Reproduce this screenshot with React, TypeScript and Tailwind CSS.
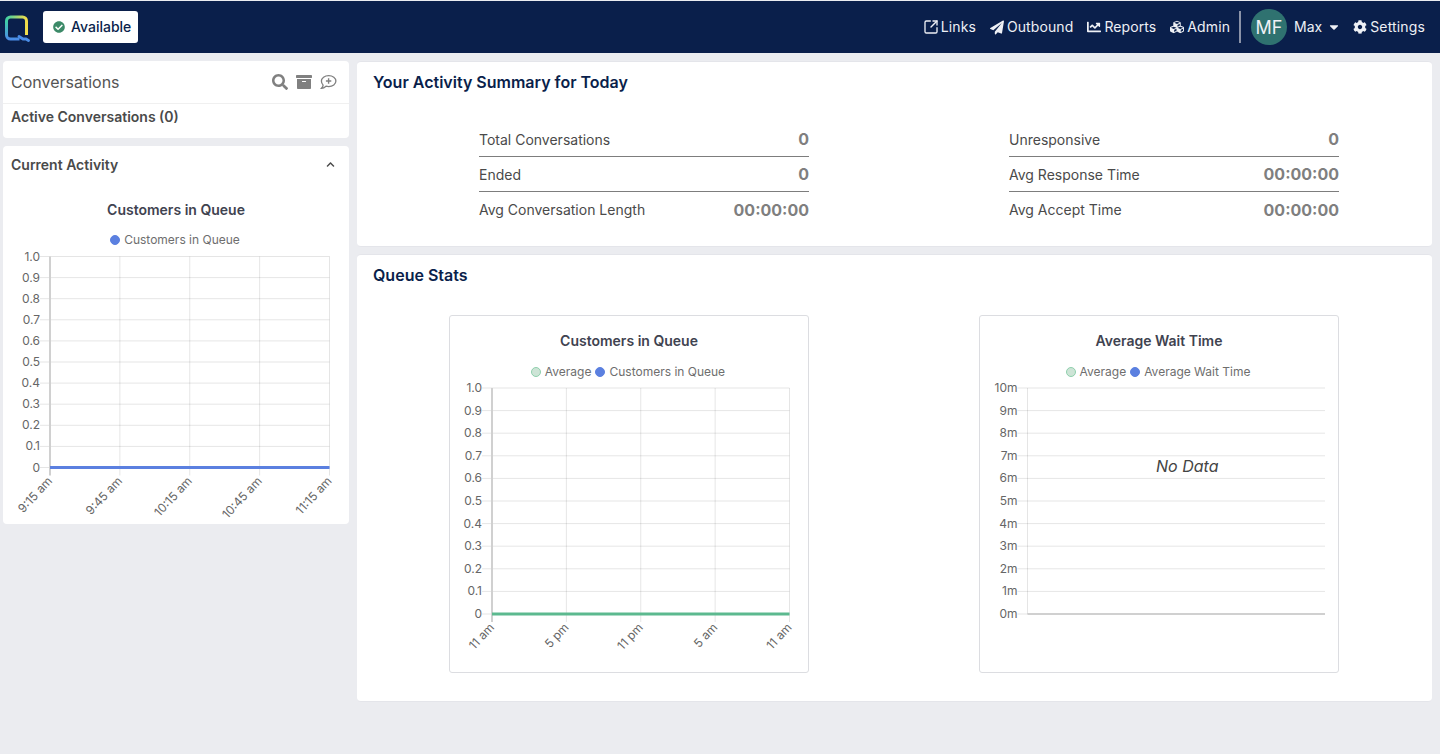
import React from "react";
import {
  FaArchive,
  FaCaretDown,
  FaChartLine,
  FaCheckCircle,
  FaChevronUp,
  FaCog,
  FaCubes,
  FaPaperPlane,
  FaSearch,
} from "react-icons/fa";
import { SquareArrowOutUpRight } from "lucide-react";

const FONT = "font-['Inter','Liberation_Sans',sans-serif]";

const Logo = () => (
  <svg width="30" height="28" viewBox="0 0 30 28" className="block">
    <defs>
      <linearGradient id="logoTop" x1="0" y1="0" x2="1" y2="0">
        <stop offset="0" stopColor="#3fcfa5" />
        <stop offset="1" stopColor="#f2dc4a" />
      </linearGradient>
      <linearGradient id="logoLeft" x1="0" y1="0" x2="0" y2="1">
        <stop offset="0" stopColor="#3fcfa5" />
        <stop offset="1" stopColor="#4a8de8" />
      </linearGradient>
    </defs>
    <path d="M5.500 21V7a4 4 0 0 1 4-4h12a4 4 0 0 1 4 4v14" fill="none" stroke="url(#logoTop)" strokeWidth="3" />
    <path d="M5.500 7v14a4 4 0 0 0 4 4h9" fill="none" stroke="url(#logoLeft)" strokeWidth="3" />
    <path d="M18 22.500l4 2.500h3l2.500 1.500" fill="none" stroke="#4a8de8" strokeWidth="2.800" strokeLinecap="round" />
  </svg>
);

// chat bubble with a plus, no matching icon in the packs
const NewChatIcon = () => (
  <svg width="17" height="16" viewBox="0 0 17 16" fill="none" stroke="#808080" strokeWidth="1.300">
    <path d="M8.700 1.600c4 0 7.200 2.400 7.200 5.500s-3.200 5.500-7.200 5.500c-1 0-1.900-.15-2.700-.4C5 13.100 3.600 14.200 1.500 14.300c.9-.9 1.500-2 1.600-3.200C2 10 1.400 8.600 1.400 7.100c0-3.100 3.300-5.500 7.300-5.500z" />
    <path d="M8.600 4.300v5.400M5.900 7h5.400" strokeWidth="1.400" />
  </svg>
);

const NavItem: React.FC<{ icon: React.ReactNode; label: string; wide?: boolean }> = ({ icon, label, wide }) => (
  <div className={`flex items-center gap-[3px] text-[14px] text-[#eef0f5] ${wide ? "tracking-[0.15px]" : "tracking-[0.1px]"}`}>
    <span className="flex w-[14px] justify-center">{icon}</span>
    <span className="pb-[2px]">{label}</span>
  </div>
);

const StatRow: React.FC<{ label: string; value: string; last?: boolean }> = ({ label, value, last }) => (
  <div className={`flex h-[35px] items-center justify-between ${last ? "" : "border-b border-[#7d7d7d]"}`}>
    <span className="text-[14px] text-[#4a4a4a]">{label}</span>
    <span className="text-[16px] font-bold text-[#7f7f7f]">{value}</span>
  </div>
);

const LegendDot: React.FC<{ color: string; border: string; label: string }> = ({ color, border, label }) => (
  <span className="flex items-center gap-[4px]">
    <span className="h-[10px] w-[10px] rounded-full border" style={{ backgroundColor: color, borderColor: border }} />
    <span>{label}</span>
  </span>
);

type ChartProps = {
  width: number;
  height: number;
  x0: number;
  x1: number;
  y0: number;
  y1: number;
  yLabels: string[];
  xLabels?: string[];
  lineColor?: string;
  noData?: boolean;
};

const Chart: React.FC<ChartProps> = ({ width, height, x0, x1, y0, y1, yLabels, xLabels, lineColor, noData }) => {
  const stepY = (y1 - y0) / (yLabels.length - 1);
  const stepX = xLabels ? (x1 - x0) / (xLabels.length - 1) : 0;
  return (
    <svg width={width} height={height} className="block">
      {yLabels.map((label, i) => {
        const y = y0 + stepY * i;
        return (
          <g key={label}>
            <line x1={x0 - 10} x2={x1} y1={y} y2={y} stroke="#000" strokeOpacity="0.1" />
            <text x={x0 - 10} y={y + 4} textAnchor="end" fontSize="12" fill="#666">
              {label}
            </text>
          </g>
        );
      })}
      {xLabels?.map((label, i) => {
        const x = x0 + stepX * i;
        return (
          <g key={label + i}>
            {i > 0 && <line x1={x} x2={x} y1={y0} y2={y1 + 8} stroke="#000" strokeOpacity="0.1" />}
            <text
              x={x + 3}
              y={y1 + 14}
              textAnchor="end"
              fontSize="12"
              fill="#666"
              transform={`rotate(-47 ${x + 3} ${y1 + 14})`}
            >
              {label}
            </text>
          </g>
        );
      })}
      {xLabels ? (
        <line x1={x0} x2={x0} y1={y0} y2={y1 + 8} stroke="#d0d0d0" strokeWidth="2" />
      ) : (
        <>
          <line x1={x0} x2={x0} y1={y0} y2={y1} stroke="#000" strokeOpacity="0.1" />
          <line x1={x0} x2={x1} y1={y1} y2={y1} stroke="#d0d0d0" strokeWidth="2" />
        </>
      )}
      {lineColor && <line x1={x0} x2={x1} y1={y1} y2={y1} stroke={lineColor} strokeWidth="3" />}
      {noData && (
        <text x={(x0 + x1) / 2 + 11} y={y0 + 84} textAnchor="middle" fontSize="16" fontStyle="italic" fill="#444">
          No Data
        </text>
      )}
    </svg>
  );
};

const decimals = ["1.0", "0.9", "0.8", "0.7", "0.6", "0.5", "0.4", "0.3", "0.2", "0.1", "0"];
const minutes = ["10m", "9m", "8m", "7m", "6m", "5m", "4m", "3m", "2m", "1m", "0m"];

export default function App() {
  return (
    <div className={`${FONT} min-h-[754px] bg-[#ebecf0] pt-px`}>
      {/* Top bar */}
      <header className="flex h-[52px] items-center justify-between bg-[#0a1f4b] pr-[15px]">
        <div className="flex items-center">
          <div className="ml-[1px] mt-[1px]">
            <Logo />
          </div>
          <div className="ml-[12px] flex h-[32px] w-[95px] items-center gap-[6px] rounded-[3px] bg-white pl-[10px] text-[14px] font-medium text-[#0a1f4b]">
            <FaCheckCircle className="text-[#3c8a68]" size={12} />
            <span className="pb-[2px]">Available</span>
          </div>
        </div>
        <div className="flex items-center">
          <div className="flex items-center gap-[14px]">
            <NavItem icon={<SquareArrowOutUpRight size={16} strokeWidth={2} className="shrink-0" />} label="Links" />
            <NavItem icon={<FaPaperPlane size={15} />} label="Outbound" />
            <NavItem icon={<FaChartLine size={14} />} label="Reports" />
            <NavItem icon={<FaCubes size={14} />} label="Admin" />
          </div>
          <div className="ml-[9px] h-[32px] w-[2px] bg-[#8b93a8]" />
          <div className="ml-[10px] flex h-[36px] w-[36px] items-center justify-center rounded-full bg-[#2f7270] text-[18px] text-[#eef0f5]">
            MF
          </div>
          <span className="ml-[7px] pb-[2px] text-[14px] text-[#eef0f5]">Max</span>
          <FaCaretDown className="ml-[5px] text-[#eef0f5]" size={14} />
          <div className="ml-[12px]">
            <NavItem icon={<FaCog size={14} />} label="Settings" wide />
          </div>
        </div>
      </header>

      <div className="flex gap-[8px] pl-[3px] pt-[8px]">
        {/* Left column */}
        <aside className="flex w-[346px] flex-col gap-[8px]">
          <section className="h-[77px] rounded-[4px] bg-white">
            <div className="flex h-[43px] items-center justify-between border-b border-[#f0f0f0] pb-[1px] pl-[8px] pr-[12px]">
              <span className="text-[16px] text-[#555]">Conversations</span>
              <div className="flex items-center gap-[8px] text-[#808080]">
                <FaSearch size={16} />
                <FaArchive size={16} />
                <NewChatIcon />
              </div>
            </div>
            <div className="pl-[8px] pt-[2px] text-[14px] font-semibold text-[#4a4a4a]">Active Conversations (0)</div>
          </section>

          <section className="h-[378px] rounded-[4px] bg-white">
            <div className="flex h-[37px] items-center justify-between pl-[8px] pr-[14px] text-[14px] font-semibold text-[#4a4a4a]">
              <span>Current Activity</span>
              <FaChevronUp size={9} />
            </div>
            <div className="pt-[16px] text-center text-[14px] font-semibold text-[#3f4350]">Customers in Queue</div>
            <div className="mt-[11px] flex justify-center pr-[2px] text-[12px] text-[#6e6e6e]">
              <LegendDot color="#5b80e0" border="#5b80e0" label="Customers in Queue" />
            </div>
            <Chart
              width={346}
              height={287}
              x0={47}
              x1={326.500}
              y0={7.500}
              y1={218.500}
              yLabels={decimals}
              xLabels={["9:15 am", "9:45 am", "10:15 am", "10:45 am", "11:15 am"]}
              lineColor="#5b80e0"
            />
          </section>
        </aside>

        {/* Right column */}
        <main className="flex w-[1075px] flex-col gap-[7px]">
          <section className="h-[186px] rounded-[4px] border-y border-y-[#e4e5ea] bg-white px-[16px] pt-[8px]">
            <h2 className="text-[16px] font-semibold text-[#0a1f4b]">Your Activity Summary for Today</h2>
            <div className="mt-[28px] flex gap-[200px] pl-[106px]">
              <div className="w-[330px]">
                <StatRow label="Total Conversations" value="0" />
                <StatRow label="Ended" value="0" />
                <StatRow label="Avg Conversation Length" value="00:00:00" last />
              </div>
              <div className="w-[330px]">
                <StatRow label="Unresponsive" value="0" />
                <StatRow label="Avg Response Time" value="00:00:00" />
                <StatRow label="Avg Accept Time" value="00:00:00" last />
              </div>
            </div>
          </section>

          <section className="h-[448px] rounded-[4px] border-y border-y-[#e4e5ea] bg-white px-[16px] pt-[8px]">
            <h2 className="text-[16px] font-semibold text-[#0a1f4b]">Queue Stats</h2>
            <div className="mt-[28px] flex gap-[170px] pl-[76px]">
              <div className="h-[358px] w-[360px] rounded-[3px] border border-[#dcdde1]">
                <div className="pt-[14px] text-center text-[14px] font-semibold text-[#3f4350]">Customers in Queue</div>
                <div className="mt-[12px] flex justify-center gap-[4px] pr-[2px] text-[12px] text-[#6e6e6e]">
                  <LegendDot color="#cde4d6" border="#8fd0ad" label="Average" />
                  <LegendDot color="#5b80e0" border="#5b80e0" label="Customers in Queue" />
                </div>
                <Chart
                  width={358}
                  height={290}
                  x0={42}
                  x1={339.500}
                  y0={7}
                  y1={233}
                  yLabels={decimals}
                  xLabels={["11 am", "5 pm", "11 pm", "5 am", "11 am"]}
                  lineColor="#5cb98f"
                />
              </div>
              <div className="h-[358px] w-[360px] rounded-[3px] border border-[#dcdde1]">
                <div className="pt-[14px] text-center text-[14px] font-semibold text-[#3f4350]">Average Wait Time</div>
                <div className="mt-[12px] flex justify-center gap-[4px] pr-[2px] text-[12px] text-[#6e6e6e]">
                  <LegendDot color="#cde4d6" border="#8fd0ad" label="Average" />
                  <LegendDot color="#5b80e0" border="#5b80e0" label="Average Wait Time" />
                </div>
                <Chart width={358} height={290} x0={47.500} x1={345} y0={7} y1={233} yLabels={minutes} noData />
              </div>
            </div>
          </section>
        </main>
      </div>
    </div>
  );
}
